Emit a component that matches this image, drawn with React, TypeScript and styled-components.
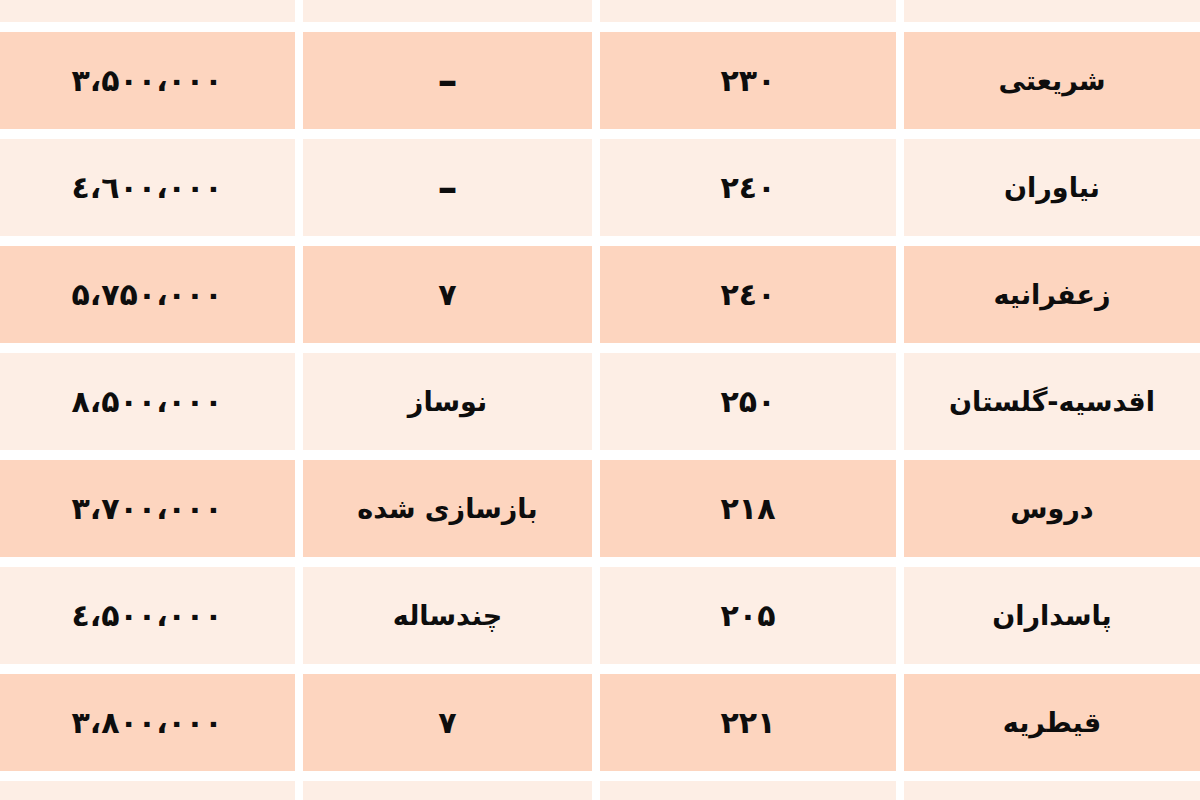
import styled, { createGlobalStyle } from "styled-components";

const GlobalStyle = createGlobalStyle`
  html, body {
    margin: 0;
    padding: 0;
    background: #ffffff;
    overflow: hidden;
  }
`;

const Page = styled.div`
  width: 1200px;
  height: 800px;
  overflow: hidden;
  background: #ffffff;
`;

const Table = styled.div`
  direction: rtl;
  display: grid;
  grid-template-columns: 296px 296px 289px 296px;
  grid-auto-rows: 97px;
  column-gap: 8px;
  row-gap: 10px;
  margin-top: -75px;
  width: 1200px;
  justify-content: start;
`;

const Cell = styled.div<{ $shade: boolean }>`
  display: flex;
  align-items: center;
  justify-content: center;
  background: ${(p) => (p.$shade ? "#fdd5bf" : "#fdeee5")};
  color: #0d0d0d;
  font-family: "DejaVu Sans", "Noto Sans", sans-serif;
  font-size: 27px;
  font-weight: bold;
  white-space: nowrap;
`;

const Num = styled.span`
  direction: ltr;
  unicode-bidi: isolate;
  font-size: 30px;
  letter-spacing: 6px;
`;

const Dash = styled.span`
  font-size: 40px;
  font-weight: bold;
`;

type Row = { area: string; size: string; age: string; price: string };

const rows: Row[] = [
  { area: "", size: "", age: "", price: "" },
  { area: "شریعتی", size: "۲۳۰", age: "–", price: "۳،۵۰۰،۰۰۰" },
  { area: "نیاوران", size: "۲٤۰", age: "–", price: "٤،٦۰۰،۰۰۰" },
  { area: "زعفرانیه", size: "۲٤۰", age: "۷", price: "۵،۷۵۰،۰۰۰" },
  { area: "اقدسیه-گلستان", size: "۲۵۰", age: "نوساز", price: "۸،۵۰۰،۰۰۰" },
  { area: "دروس", size: "۲۱۸", age: "بازسازی شده", price: "۳،۷۰۰،۰۰۰" },
  { area: "پاسداران", size: "۲۰۵", age: "چندساله", price: "٤،۵۰۰،۰۰۰" },
  { area: "قیطریه", size: "۲۲۱", age: "۷", price: "۳،۸۰۰،۰۰۰" },
  { area: "", size: "", age: "", price: "" },
];

export default function App() {
  return (
    <Page>
      <GlobalStyle />
      <Table>
        {rows.map((r, i) => {
          const shade = i % 2 === 1;
          const age =
            r.age === "–" ? <Dash>–</Dash> : r.age === "۷" ? <Num>۷</Num> : r.age;
          return [
            <Cell key={`a${i}`} $shade={shade}>{r.area}</Cell>,
            <Cell key={`s${i}`} $shade={shade}><Num>{r.size}</Num></Cell>,
            <Cell key={`g${i}`} $shade={shade}>{age}</Cell>,
            <Cell key={`p${i}`} $shade={shade}><Num>{r.price}</Num></Cell>,
          ];
        })}
      </Table>
    </Page>
  );
}
